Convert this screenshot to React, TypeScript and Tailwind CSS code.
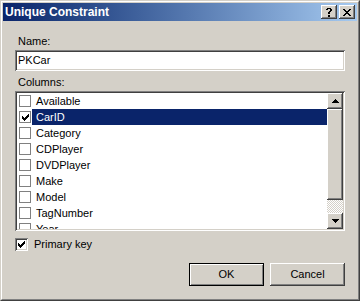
import React from 'react'

const raised =
  'shadow-[inset_-1px_-1px_#404040,inset_1px_1px_#ffffff,inset_-2px_-2px_#808080,inset_2px_2px_#d4d0c8]'
const sunken =
  'shadow-[inset_1px_1px_#808080,inset_-1px_-1px_#ffffff,inset_2px_2px_#404040,inset_-2px_-2px_#d4d0c8]'

function Pix({ rows, color = '#000' }: { rows: string[]; color?: string }) {
  return (
    <svg
      width={rows[0].length}
      height={rows.length}
      viewBox={`0 0 ${rows[0].length} ${rows.length}`}
      shapeRendering="crispEdges"
      className="block"
    >
      {rows.map((r, y) =>
        r.split('').map((c, x) =>
          c === 'X' ? <rect key={`${x}-${y}`} x={x} y={y} width={1} height={1} fill={color} /> : null,
        ),
      )}
    </svg>
  )
}

const check = ['......X', '.....XX', 'X...XXX', 'XX.XXX.', 'XXXXX..', '.XXX...', '..X....']
const close = ['XX....XX', '.XX..XX.', '..XXXX..', '...XX...', '..XXXX..', '.XX..XX.', 'XX....XX']
const help = ['.XXXX.', 'XX..XX', '....XX', '...XX.', '..XX..', '..XX..', '......', '..XX..', '..XX..']
const up = ['...X...', '..XXX..', '.XXXXX.', 'XXXXXXX']
const down = ['XXXXXXX', '.XXXXX.', '..XXX..', '...X...']

const columns = ['Available', 'CarID', 'Category', 'CDPlayer', 'DVDPlayer', 'Make', 'Model', 'TagNumber', 'Year']

export default function App() {
  return (
    <div className="w-[360px] h-[301px] border border-t-[#d4d0c8] border-l-[#d4d0c8] border-r-[#404040] border-b-[#404040] bg-[#d4d0c8] font-['Liberation_Sans',Arial,sans-serif] text-[11px] leading-[13px] text-black">
      <div className="h-full border border-t-white border-l-white border-r-[#808080] border-b-[#808080] p-px flex flex-col">
        {/* caption */}
        <div className="h-[18px] shrink-0 flex items-center justify-between pl-[2px] pr-[2px] bg-linear-to-r from-[#0a246a] to-[#a6caf0]">
          <span className="text-white font-bold text-[12px]">Unique Constraint</span>
          <div className="flex gap-[2px]">
            <div className={`w-[16px] h-[14px] bg-[#d4d0c8] flex items-center justify-center ${raised}`}>
              <Pix rows={help} />
            </div>
            <div className={`w-[16px] h-[14px] bg-[#d4d0c8] flex items-center justify-center ${raised}`}>
              <Pix rows={close} />
            </div>
          </div>
        </div>

        {/* client */}
        <div className="flex-1 flex flex-col px-[12px] pt-[14px]">
          <div className="pl-[3px]">Name:</div>
          <div className={`mt-[2px] h-[21px] bg-white flex items-center pl-[3px] ${sunken}`}>PKCar</div>

          <div className="mt-[5px] pl-[3px]">Columns:</div>
          <div className={`mt-[2px] h-[140px] bg-white p-[2px] flex ${sunken}`}>
            <div className="flex-1 overflow-hidden">
              {columns.map((c, i) => {
                const sel = i === 1
                return (
                  <div key={c} className="h-[16px] flex items-center">
                    <div className="ml-[2px] w-[12px] h-[12px] border border-[#808080] bg-white flex items-center justify-center">
                      {sel && <Pix rows={check} />}
                    </div>
                    <div
                      className={`ml-[1px] flex-1 h-full flex items-center pl-[4px] ${
                        sel ? 'bg-[#0a246a] text-white' : ''
                      }`}
                    >
                      {c}
                    </div>
                  </div>
                )
              })}
            </div>
            {/* scrollbar */}
            <div className="w-[16px] flex flex-col">
              <div className={`h-[16px] bg-[#d4d0c8] flex items-center justify-center ${raised}`}>
                <Pix rows={up} />
              </div>
              <div className={`h-[91px] bg-[#d4d0c8] ${raised}`} />
              <div className="flex-1 bg-[repeating-conic-gradient(#d4d0c8_0_25%,#ffffff_0_50%)] bg-[length:2px_2px]" />
              <div className={`h-[16px] bg-[#d4d0c8] flex items-center justify-center ${raised}`}>
                <Pix rows={down} />
              </div>
            </div>
          </div>

          <div className="mt-[7px] flex items-center">
            <div className={`w-[13px] h-[13px] bg-white flex items-center justify-center ${sunken}`}>
              <Pix rows={check} />
            </div>
            <span className="ml-[6px]">Primary key</span>
          </div>

          <div className="mt-[12px] flex justify-end gap-[6px]">
            <button className="w-[75px] h-[23px] border border-black bg-[#d4d0c8] shadow-[inset_1px_1px_#ffffff,inset_-1px_-1px_#808080] flex items-center justify-center">
              OK
            </button>
            <button className={`w-[75px] h-[23px] bg-[#d4d0c8] flex items-center justify-center ${raised}`}>
              Cancel
            </button>
          </div>
        </div>
      </div>
    </div>
  )
}
